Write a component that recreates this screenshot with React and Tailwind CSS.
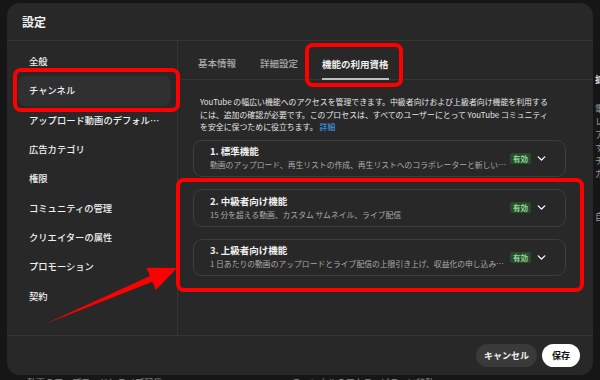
import React from "react";
import { ChevronDown } from "lucide-react";

const menu = [
  "全般",
  "チャンネル",
  "アップロード動画のデフォルト設定",
  "広告カテゴリ",
  "権限",
  "コミュニティの管理",
  "クリエイターの属性",
  "プロモーション",
  "契約",
];

const features = [
  {
    title: "1. 標準機能",
    desc: "動画のアップロード、再生リストの作成、再生リストへのコラボレーターと新しい機能の追加",
  },
  { title: "2. 中級者向け機能", desc: "15 分を超える動画、カスタム サムネイル、ライブ配信" },
  {
    title: "3. 上級者向け機能",
    desc: "1 日あたりの動画のアップロードとライブ配信の上限引き上げ、収益化の申し込み、外部リンク",
  },
];

const FeatureCard = ({ title, desc }) => (
  <div className="flex items-center h-[37.5px] pl-[16px] pr-[17px] rounded-[9px] border border-[#3d3d3d]">
    <div className="flex-1 min-w-0 mr-[4px]">
      <div className="text-[9.5px] leading-[14px] font-bold text-[#f1f1f1]">{title}</div>
      <div className="text-[7.8px] leading-[14px] text-[#aaaaaa] truncate">{desc}</div>
    </div>
    <span className="px-[3px] h-[11px] flex items-center rounded-[2px] bg-[#2a4a2c] text-[#8fd694] text-[7.5px] font-bold">
      有効
    </span>
    <ChevronDown className="ml-[4px] text-white" size={13} strokeWidth={2.5} />
  </div>
);

const RedBox = ({ className }) => (
  <div className={`absolute border-[4px] border-[#ff0000] rounded-[8px] pointer-events-none ${className}`} />
);

export default function App() {
  return (
    <div className="relative w-[600px] h-[380px] overflow-hidden bg-[#161616] font-['Noto_Sans_CJK_JP','Noto_Sans',sans-serif] text-white">
      <div className="flex">
        <div className="ml-[7px] mt-[3px] w-[587px] h-[372px] rounded-[13px] bg-[#282828] flex flex-col overflow-hidden">
          <header className="h-[38px] shrink-0 flex items-center pl-[15px] border-b border-[#353535]">
            <h1 className="text-[12px] font-bold text-[#f1f1f1]">設定</h1>
          </header>

          <div className="flex flex-1 min-h-0">
            <nav className="w-[171px] shrink-0 border-r border-[#353535] pt-[6px]">
              {menu.map((m, i) => (
                <div
                  key={m}
                  className={`h-[29.4px] ml-[11px] mr-[6px] pl-[11px] pr-[4px] flex items-center rounded-[8px] text-[9.3px] font-medium text-[#f1f1f1] ${
                    i === 1 ? "bg-[#303030] font-bold" : ""
                  }`}
                >
                  <span className="truncate">{m}</span>
                </div>
              ))}
            </nav>

            <main className="flex-1 min-w-0">
              <div className="h-[39px] flex items-stretch gap-[24px] pl-[20px] border-b border-[#353535]">
                <div className="pt-[9px] flex items-center border-b-2 border-transparent text-[9.5px] text-[#aaaaaa] font-medium">
                  基本情報
                </div>
                <div className="pt-[9px] flex items-center border-b-2 border-transparent text-[9.5px] text-[#aaaaaa] font-medium">
                  詳細設定
                </div>
                <div className="pt-[9px] flex items-center border-b-2 border-[#bdbdbd] -mb-px text-[9.5px] text-[#f1f1f1] font-bold">
                  機能の利用資格
                </div>
              </div>

              <p className="pt-[16px] pl-[22px] text-[7.9px] leading-[12.7px] text-[#e6e6e6] whitespace-nowrap">
                YouTube の幅広い機能へのアクセスを管理できます。中級者向けおよび上級者向け機能を利用する
                <br />
                には、追加の確認が必要です。このプロセスは、すべてのユーザーにとって YouTube コミュニティ
                <br />
                を安全に保つために役立ちます。<span className="text-[#3ea6ff] ml-[2px]">詳細</span>
              </p>

              <div className="mt-[5.5px] ml-[15px] w-[373px] flex flex-col gap-[12px]">
                {features.map((f) => (
                  <FeatureCard key={f.title} {...f} />
                ))}
              </div>
            </main>
          </div>

          <footer className="h-[40px] shrink-0 border-t border-[#353535] flex items-center justify-end gap-[5px] pr-[13px]">
            <button className="h-[23px] w-[61px] rounded-full bg-[#3a3a3a] text-[9px] font-bold text-[#f1f1f1]">
              キャンセル
            </button>
            <button className="h-[23px] w-[38px] rounded-full bg-white text-[9px] font-bold text-[#0f0f0f]">
              保存
            </button>
          </footer>
        </div>

        <div className="ml-[2px] w-[5px] overflow-hidden text-[9px] leading-[13px] text-[#9a9a9a] whitespace-nowrap pt-[73px]">
          <div className="text-[#dddddd] font-bold">拡張</div>
          <div className="mt-[16px]">電話</div>
          <div>レア</div>
          <div>アカ</div>
          <div>すべ</div>
          <div>チャ</div>
          <div>ガイ</div>
          <div className="mt-[30px]">自動</div>
        </div>
      </div>

      <div className="flex text-[9px] text-[#8a8a8a] whitespace-nowrap pt-[1px]">
        <span className="ml-[27px]">動画のアップロードとライブ配信</span>
        <span className="ml-[130px]">チャンネルのアクティビティに移動</span>
      </div>

      <RedBox className="left-[13px] top-[68px] w-[167px] h-[44px]" />
      <RedBox className="left-[305px] top-[43px] w-[98px] h-[44px]" />
      <RedBox className="left-[176px] top-[178px] w-[408px] h-[114px]" />

      <svg className="absolute inset-0 pointer-events-none" width="600" height="380" viewBox="0 0 600 380">
        <polygon
          points="45,324 150,276 146.5,267.8 177,268 155.9,290 152.4,281.7"
          fill="#ff0000"
        />
      </svg>
    </div>
  );
}
